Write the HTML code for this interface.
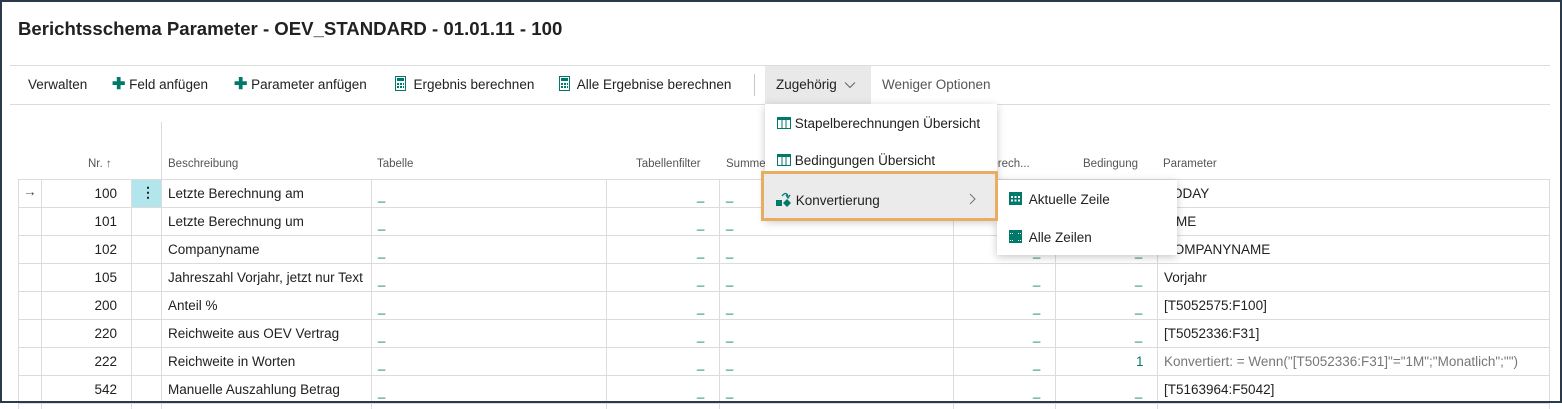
<!DOCTYPE html>
<html><head><meta charset="utf-8"><style>
*{box-sizing:border-box;margin:0;padding:0}
body{width:1562px;height:403px;overflow:hidden;background:#fff;font-family:"Liberation Sans",sans-serif;color:#212121;position:relative}
.frame{position:absolute;left:0;top:0;width:1562px;height:403px;border:2px solid #2b3a4a;z-index:50;pointer-events:none}
.abs{position:absolute;white-space:nowrap}
.title{left:18px;top:18px;font-size:18.6px;font-weight:bold;color:#212121}
.hl{position:absolute;height:1px;background:#dcdcdc}
.vl{position:absolute;width:1px;background:#dcdcdc}
.tb{top:75px;font-size:13.5px;color:#212121;line-height:20px;height:20px}
.plus{color:#00796b;font-weight:bold;font-size:16px;line-height:20px}
.hdr{top:158px;font-size:11.5px;color:#555}
.cell{font-size:13.5px;color:#212121}
.dash{color:#00796b;font-size:13px}
.menu{position:absolute;background:#fff;box-shadow:0 2px 8px rgba(0,0,0,.22);z-index:20}
.mi{position:absolute;left:0;font-size:13.5px;color:#212121;white-space:nowrap}
</style></head><body>
<div class="frame"></div>
<div class="abs title">Berichtsschema Parameter - OEV_STANDARD - 01.01.11 - 100</div>
<div class="hl" style="left:10px;top:65px;width:1540px"></div>
<div class="hl" style="left:10px;top:104px;width:1540px"></div>

<div class="abs tb" style="left:28px">Verwalten</div>
<div class="abs tb" style="left:112px"><span class="plus">✚</span> Feld anfügen</div>
<div class="abs tb" style="left:234px"><span class="plus">✚</span> Parameter anfügen</div>
<div class="abs tb" style="left:395px"><svg width="11" height="15" style="vertical-align:-2px"><rect x="0.5" y="0.5" width="10" height="14" fill="#fff" stroke="#00796b"/><rect x="2" y="2" width="7" height="3" fill="#00796b"/><g fill="#00796b"><rect x="2" y="7" width="2" height="2"/><rect x="5" y="7" width="2" height="2"/><rect x="8" y="7" width="1" height="2"/><rect x="2" y="10" width="2" height="2"/><rect x="5" y="10" width="2" height="2"/><rect x="8" y="10" width="1" height="2"/></g></svg>&nbsp; Ergebnis berechnen</div>
<div class="abs tb" style="left:559px"><svg width="11" height="15" style="vertical-align:-2px"><rect x="0.5" y="0.5" width="10" height="14" fill="#fff" stroke="#00796b"/><rect x="2" y="2" width="7" height="3" fill="#00796b"/><g fill="#00796b"><rect x="2" y="7" width="2" height="2"/><rect x="5" y="7" width="2" height="2"/><rect x="8" y="7" width="1" height="2"/><rect x="2" y="10" width="2" height="2"/><rect x="5" y="10" width="2" height="2"/><rect x="8" y="10" width="1" height="2"/></g></svg>&nbsp; Alle Ergebnise berechnen</div>
<div class="vl" style="left:754px;top:74px;height:22px;background:#c8c8c8"></div>
<div class="abs" style="left:765px;top:66px;width:106px;height:38px;background:#e9e9e9"></div>
<div class="abs tb" style="left:776px">Zugehörig <svg width="12" height="8" style="margin-left:3px"><path d="M1 1.5 L6 6.5 L11 1.5" fill="none" stroke="#666" stroke-width="1.1"/></svg></div>
<div class="abs tb" style="left:882px;color:#555">Weniger Optionen</div>

<div class="vl" style="left:161px;top:122px;height:57px"></div>
<div class="abs hdr" style="left:88px;">Nr. ↑</div>
<div class="abs hdr" style="left:168px">Beschreibung</div>
<div class="abs hdr" style="left:377px">Tabelle</div>
<div class="abs hdr" style="left:636px">Tabellenfilter</div>
<div class="abs hdr" style="left:726px">Summe</div>
<div class="abs hdr" style="left:985px">berech...</div>
<div class="abs hdr" style="left:1083px">Bedingung</div>
<div class="abs hdr" style="left:1163px">Parameter</div>

<div id="rows"></div>
<script>
var data=[["100","Letzte Berechnung am","TODAY"],["101","Letzte Berechnung um","TIME"],["102","Companyname","COMPANYNAME"],["105","Jahreszahl Vorjahr, jetzt nur Text","Vorjahr"],["200","Anteil %","[T5052575:F100]"],["220","Reichweite aus OEV Vertrag","[T5052336:F31]"],["222","Reichweite in Worten",'Konvertiert: = Wenn("[T5052336:F31]"="1M";"Monatlich";"")'],["542","Manuelle Auszahlung Betrag","[T5163964:F5042]"]];
var h='';
var lines=[18,41,131,161,371,606,719,953,1055,1157,1549];
for(var i=0;i<=8;i++){h+='<div class="hl" style="left:18px;top:'+(179+i*28)+'px;width:1532px"></div>';}
lines.forEach(function(x){h+='<div class="vl" style="left:'+x+'px;top:179px;height:230px"></div>';});
h+='<div class="abs" style="left:132px;top:180px;width:29px;height:27px;background:#b2e6ec"></div>';
h+='<div class="abs cell" style="left:141px;top:184px;font-weight:bold;font-size:14px">⋮</div>';
h+='<div class="abs cell" style="left:23px;top:184px;color:#444">→</div>';
data.forEach(function(r,i){var y=179+i*28;
h+='<div class="abs cell" style="left:60px;width:57px;text-align:right;top:'+(y+7)+'px">'+r[0]+'</div>';
h+='<div class="abs cell" style="left:168px;top:'+(y+7)+'px">'+r[1]+'</div>';
h+='<div class="abs dash" style="left:378px;top:'+(y+9)+'px">_</div>';
h+='<div class="abs dash" style="left:697px;top:'+(y+9)+'px">_</div>';
h+='<div class="abs dash" style="left:726px;top:'+(y+9)+'px">_</div>';
h+='<div class="abs dash" style="left:1033px;top:'+(y+9)+'px">_</div>';
if(i==6)h+='<div class="abs cell" style="left:1136px;top:'+(y+7)+'px;color:#00796b">1</div>';
else h+='<div class="abs dash" style="left:1135px;top:'+(y+9)+'px">_</div>';
h+='<div class="abs cell" style="left:1164px;top:'+(y+7)+'px;'+(i==6?'color:#777':'')+'">'+r[2].replace(/</g,'&lt;')+'</div>';
});
document.getElementById('rows').innerHTML=h;
</script>

<div class="menu" style="left:765px;top:104px;width:232px;height:116px">
 <div class="mi" style="left:12px;top:12px"><svg width="14" height="12" style="vertical-align:-1px"><rect x="0.5" y="0.5" width="13" height="11" fill="none" stroke="#00796b"/><rect x="0" y="0" width="14" height="3" fill="#00796b"/><line x1="5" y1="0" x2="5" y2="12" stroke="#00796b"/><line x1="9" y1="0" x2="9" y2="12" stroke="#00796b"/></svg> Stapelberechnungen Übersicht</div>
 <div class="mi" style="left:12px;top:49px"><svg width="14" height="12" style="vertical-align:-1px"><rect x="0.5" y="0.5" width="13" height="11" fill="none" stroke="#00796b"/><rect x="0" y="0" width="14" height="3" fill="#00796b"/><line x1="5" y1="0" x2="5" y2="12" stroke="#00796b"/><line x1="9" y1="0" x2="9" y2="12" stroke="#00796b"/></svg> Bedingungen Übersicht</div>
</div>
<div class="abs" style="left:761px;top:171px;width:237px;height:50px;border:3px solid #e9ad62;background:#ebebeb;z-index:21"></div>
<div class="mi" style="position:absolute;left:776px;top:191px;z-index:22"><svg width="16" height="16" style="vertical-align:-2px"><rect x="0" y="9" width="6" height="6" fill="#00796b"/><path d="M11 8 L15 12 L11 16 L7 12Z" fill="#00796b"/><path d="M6 5 Q10 0 12 5" fill="none" stroke="#00796b" stroke-width="1.3"/><path d="M10 4 L12 7 L14 4" fill="none" stroke="#00796b" stroke-width="1.3"/></svg> Konvertierung</div>
<svg style="position:absolute;left:969px;top:193px;z-index:22" width="8" height="12"><path d="M1 1 L6 6 L1 11" fill="none" stroke="#777" stroke-width="1.1"/></svg>

<div class="menu" style="left:997px;top:180px;width:180px;height:75px">
 <div class="mi" style="left:12px;top:12px"><svg width="13" height="13" style="vertical-align:-1px"><rect width="13" height="13" fill="#00796b"/><g fill="#fff"><rect x="2" y="4" width="2" height="2"/><rect x="5.5" y="4" width="2" height="2"/><rect x="9" y="4" width="2" height="2"/><rect x="2" y="7.5" width="2" height="2"/><rect x="5.5" y="7.5" width="2" height="2"/><rect x="9" y="7.5" width="2" height="2"/></g></svg>&nbsp; Aktuelle Zeile</div>
 <div class="mi" style="left:12px;top:50px"><svg width="13" height="13" style="vertical-align:-1px"><rect width="13" height="13" fill="#00796b"/><g fill="#fff"><rect x="1" y="3" width="1" height="1"/><rect x="3" y="3" width="1" height="1"/><rect x="9" y="3" width="1" height="1"/><rect x="11" y="3" width="1" height="1"/><rect x="1" y="10" width="1" height="1"/><rect x="3" y="10" width="1" height="1"/><rect x="9" y="10" width="1" height="1"/><rect x="11" y="10" width="1" height="1"/></g></svg>&nbsp; Alle Zeilen</div>
</div>
</body></html>
